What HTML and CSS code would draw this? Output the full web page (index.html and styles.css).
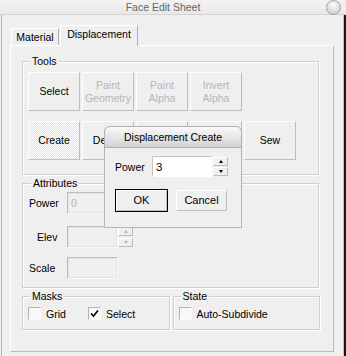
FILE: index.html
```html
<!DOCTYPE html>
<html lang="en">
<head>
  <meta charset="UTF-8" />
  <title>Face Edit Sheet</title>
  <link rel="stylesheet" href="styles.css">
</head>
<body>
  <div class="window">
    <div class="titlebar">
      <span class="title">Face Edit Sheet</span>
      <span class="close-btn"></span>
    </div>

    <div class="frame">
      <div class="client">
        <div class="tabs">
          <div class="tab">Material</div>
          <div class="tab active">Displacement</div>
        </div>

        <div class="panel">
          <div class="group">
            <div class="group-label">Tools</div>
            <div class="tool-grid">
              <button class="btn">Select</button>
              <button class="btn" disabled>Paint<br>Geometry</button>
              <button class="btn" disabled>Paint<br>Alpha</button>
              <button class="btn" disabled>Invert<br>Alpha</button>
              <button class="btn pressed row-start">Create</button>
              <button class="btn">Delete</button>
              <button class="btn"></button>
              <button class="btn"></button>
              <button class="btn">Sew</button>
            </div>
          </div>

          <div class="group attributes">
            <div class="group-label">Attributes</div>
            <div class="attr-row first">
              <span class="attr-label">Power</span>
              <span class="field disabled">0</span>
              <span class="spinner disabled"><span class="spin up"></span><span class="spin down"></span></span>
            </div>
            <div class="attr-row elev">
              <span class="attr-label indent">Elev</span>
              <span class="field disabled"></span>
              <span class="spinner disabled"><span class="spin up"></span><span class="spin down"></span></span>
            </div>
            <div class="attr-row scale">
              <span class="attr-label">Scale</span>
              <span class="field disabled"></span>
            </div>
          </div>

          <div class="group-row">
            <div class="group small">
              <div class="group-label">Masks</div>
              <div class="checks">
                <label class="check"><span class="box"></span>Grid</label>
                <label class="check"><span class="box"><svg width="9" height="9" viewBox="0 0 9 9"><path d="M1 4.5 L3.5 7 L8 1.5" fill="none" stroke="#000" stroke-width="1.6"/></svg></span>Select</label>
              </div>
            </div>
            <div class="group small">
              <div class="group-label">State</div>
              <div class="checks">
                <label class="check wide"><span class="box"></span>Auto-Subdivide</label>
              </div>
            </div>
          </div>
        </div>
      </div>
      <div class="edge"></div>
    </div>

    <div class="dialog">
      <div class="dialog-title">Displacement Create</div>
      <div class="dialog-body">
        <div class="dialog-row">
          <span class="dialog-label">Power</span>
          <span class="field white">3</span>
          <span class="spinner"><span class="spin up"></span><span class="spin down"></span></span>
        </div>
        <div class="dialog-buttons">
          <button class="btn default">OK</button>
          <button class="btn cancel">Cancel</button>
        </div>
      </div>
    </div>
  </div>
</body>
</html>
```

FILE: styles.css
```css
* {
  box-sizing: border-box;
  margin: 0;
  padding: 0;
  font-family: 'Liberation Sans', Arial, sans-serif;
  font-size: 10.5px;
}

body {
  background-color: #efefef;
  color: #000;
  width: 346px;
  height: 356px;
  overflow: hidden;
}

.window {
  position: relative;
  height: 356px;
}

.titlebar {
  height: 15px;
  display: flex;
  align-items: center;
  background: linear-gradient(#f3f3f3, #e8e8e8);
  border-bottom: 1px solid #d4d4d4;
  padding-right: 5px;
}

.title {
  flex: 1;
  text-align: center;
  color: #666;
  line-height: 14px;
}

.close-btn {
  width: 15px;
  height: 15px;
  border-radius: 50%;
  border: 1px solid #a4a4a4;
  background: radial-gradient(circle at 50% 30%, #fdfdfd, #dcdcdc 60%, #c4c4c4);
}

.frame {
  display: flex;
  height: 341px;
}

.client {
  flex: 1;
  margin-left: 1px;
  border-left: 1px solid #b4b4b4;
  padding: 10px 0 0 8px;
}

.edge {
  width: 3px;
  background-color: #161616;
  border-left: 1px solid #c4c4c4;
}

/* tabs */
.tabs {
  display: flex;
  align-items: flex-end;
  height: 20px;
}

.tab {
  width: 48px;
  height: 17px;
  margin-left: 1px;
  border: 1px solid;
  border-color: #fff #b0b0b0 transparent #fff;
  border-bottom: none;
  text-align: center;
  line-height: 16px;
}

.tab.active {
  position: relative;
  z-index: 1;
  width: 78px;
  height: 21px;
  margin-left: 1px;
  margin-bottom: -1px;
  background-color: #efefef;
  line-height: 17px;
}

.panel {
  width: 324px;
  height: 307px;
  border: 1px solid;
  border-color: #fff #bcbcbc #bcbcbc #fff;
  padding: 15px 0 0 11px;
}

/* groups */
.group {
  width: 297px;
  border: 1px solid #cfcfcf;
  box-shadow: inset 1px 1px 0 #fff, 1px 1px 0 #fff;
  padding: 0 0 14px 5px;
}

.group-label {
  width: max-content;
  margin: -7px 0 0 2px;
  padding: 0 2px;
  background-color: #efefef;
  line-height: 12px;
}

.tool-grid {
  display: grid;
  grid-template-columns: repeat(5, 52px);
  grid-auto-rows: 39px;
  gap: 10px 2px;
  margin-top: 5px;
}

.row-start {
  grid-column: 1;
}

.btn {
  background-color: #efefef;
  border: 1px solid;
  border-color: #fdfdfd #bdbdbd #bdbdbd #fdfdfd;
  color: #000;
  line-height: 13px;
  cursor: pointer;
}

.btn:disabled {
  color: #b6b6b6;
}

.btn.pressed {
  background: repeating-conic-gradient(#fbfbfb 0 25%, #e6e6e6 0 50%) 0 0 / 2px 2px;
}

/* attributes */
.attributes {
  margin-top: 8px;
  padding: 0 0 8px 6px;
}

.attr-row {
  display: flex;
  align-items: center;
  height: 22px;
}

.attr-row.first {
  margin-top: 3px;
}

.attr-row.elev {
  margin-top: 12px;
}

.attr-row.scale {
  margin-top: 9px;
}

.attr-label {
  width: 38px;
}

.attr-label.indent {
  padding-left: 8px;
}

.field {
  width: 51px;
  height: 22px;
  border: 1px solid;
  border-color: #bdbdbd #fafafa #fafafa #bdbdbd;
  padding: 4px 3px;
  line-height: 12px;
}

.field.disabled {
  color: #b6b6b6;
  box-shadow: inset 0 0 0 1px #e2e2e2;
}

.spinner {
  display: flex;
  flex-direction: column;
  justify-content: space-between;
  width: 15px;
  height: 22px;
  padding: 1px 0;
}

.spin {
  height: 9px;
  border: 1px solid;
  border-color: #fff #bcbcbc #bcbcbc #fff;
  display: flex;
  align-items: center;
  justify-content: center;
}

.spin::after {
  content: '';
  border-left: 2.5px solid transparent;
  border-right: 2.5px solid transparent;
}

.spin.up::after {
  border-bottom: 3px solid #000;
}

.spin.down::after {
  border-top: 3px solid #000;
}

.spinner.disabled .spin.up::after {
  border-bottom-color: #b6b6b6;
}

.spinner.disabled .spin.down::after {
  border-top-color: #b6b6b6;
}

/* masks / state */
.group-row {
  display: flex;
  gap: 3px;
  width: 298px;
  margin-top: 8px;
}

.group.small {
  flex: 1;
  padding: 0 0 9px 5px;
}

.checks {
  display: flex;
  margin-top: 5px;
}

.check {
  display: flex;
  align-items: center;
  gap: 5px;
  width: 60px;
  height: 13px;
  white-space: nowrap;
}

.check.wide {
  width: auto;
}

.box {
  flex-shrink: 0;
  width: 13px;
  height: 13px;
  border: 1px solid;
  border-color: #b4b4b4 #fafafa #fafafa #b4b4b4;
  background-color: #f8f8f8;
  display: flex;
  align-items: center;
  justify-content: center;
}

/* dialog over the sheet */
.dialog {
  position: absolute;
  left: 104px;
  top: 126px;
  width: 138px;
  height: 102px;
  background-color: #efefef;
  border: 1px solid #b4b4b4;
  border-top: none;
  border-radius: 6px 6px 0 0;
}

.dialog-title {
  height: 22px;
  margin: 0 -1px;
  border: 1px solid #b0b0b0;
  border-radius: 6px 6px 0 0;
  background: linear-gradient(#fafafa, #e6e6e6 50%, #d2d2d2);
  text-align: center;
  line-height: 20px;
}

.dialog-body {
  padding: 8px 0 0 10px;
}

.dialog-row {
  display: flex;
  align-items: center;
  height: 21px;
}

.dialog-label {
  width: 37px;
}

.field.white {
  width: 60px;
  height: 21px;
  background-color: #fff;
  border-color: #c4c4c4 #fff #fff #c4c4c4;
  font-size: 11.5px;
}

.dialog-row .spinner {
  width: 15px;
  height: 21px;
  margin-left: 1px;
}

.dialog-buttons {
  display: flex;
  align-items: center;
  gap: 8px;
  margin-top: 12px;
}

.btn.default {
  width: 53px;
  height: 23px;
  border: 1px solid #000;
  box-shadow: inset 1px 1px 0 #fff, inset -1px -1px 0 #bdbdbd;
  font-size: 11px;
}

.btn.cancel {
  width: 51px;
  height: 21px;
  font-size: 11px;
}
```
